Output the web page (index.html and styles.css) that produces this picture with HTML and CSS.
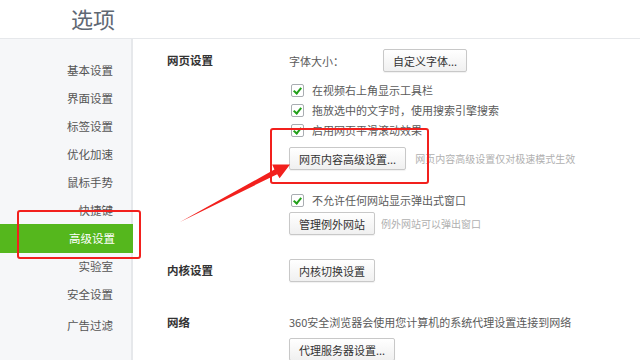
FILE: index.html
```html
<!DOCTYPE html>
<html lang="zh-CN">
<head>
    <meta charset="UTF-8">
    <title>选项</title>
    <link rel="stylesheet" href="styles.css">
</head>
<body>
    <div class="page">
        <header class="top-bar">
            <h1 class="title">选项</h1>
        </header>
        <div class="layout">
            <nav class="sidebar">
                <a class="nav-item">基本设置</a>
                <a class="nav-item">界面设置</a>
                <a class="nav-item">标签设置</a>
                <a class="nav-item">优化加速</a>
                <a class="nav-item">鼠标手势</a>
                <a class="nav-item">快捷键</a>
                <a class="nav-item active">高级设置</a>
                <a class="nav-item">实验室</a>
                <a class="nav-item">安全设置</a>
                <a class="nav-item last">广告过滤</a>
            </nav>
            <main class="content">
                <section class="section">
                    <div class="section-label">网页设置</div>
                    <div class="section-body">
                        <div class="row">
                            <span class="field-label">字体大小：</span>
                            <button class="btn">自定义字体...</button>
                        </div>
                        <div class="checks">
                            <label class="check"><span class="box"></span>在视频右上角显示工具栏</label>
                            <label class="check"><span class="box"></span>拖放选中的文字时，使用搜索引擎搜索</label>
                            <label class="check"><span class="box"></span>启用网页平滑滚动效果</label>
                        </div>
                        <div class="row gap-sm">
                            <button class="btn">网页内容高级设置...</button>
                            <span class="hint">网页内容高级设置仅对极速模式生效</span>
                        </div>
                        <label class="check popup"><span class="box"></span>不允许任何网站显示弹出式窗口</label>
                        <div class="row gap-xs">
                            <button class="btn">管理例外网站</button>
                            <span class="hint">例外网站可以弹出窗口</span>
                        </div>
                    </div>
                </section>
                <section class="section kernel">
                    <div class="section-label">内核设置</div>
                    <div class="section-body">
                        <button class="btn">内核切换设置</button>
                    </div>
                </section>
                <section class="section network">
                    <div class="section-label text-line">网络</div>
                    <div class="section-body">
                        <p class="text-line">360安全浏览器会使用您计算机的系统代理设置连接到网络</p>
                        <div class="row gap-proxy">
                            <button class="btn">代理服务器设置...</button>
                        </div>
                    </div>
                </section>
            </main>
        </div>

        <!-- annotation overlay -->
        <div class="mark mark-nav"></div>
        <div class="mark mark-btn"></div>
        <svg class="arrow" viewBox="0 0 640 360" width="640" height="360">
            <polygon points="180,222 274.4,169.6 272.2,164.6 290,164.5 279.6,178.2 277.2,174.2" fill="#f2201d"/>
        </svg>
    </div>
</body>
</html>
```

FILE: styles.css
```css
* {
    margin: 0;
    padding: 0;
    box-sizing: border-box;
}

body {
    background: #fff;
    font-family: "Noto Sans CJK SC", "Noto Sans", sans-serif;
    font-size: 11px;
    color: #5a5a5a;
}

.page {
    position: relative;
    width: 640px;
    height: 360px;
    overflow: hidden;
}

/* Header */
.top-bar {
    height: 39px;
    border-bottom: 1px solid #e6e8eb;
    padding-left: 71px;
}

.title {
    font-size: 22px;
    font-weight: normal;
    color: #5f6873;
    line-height: 37px;
}

.layout {
    display: flex;
    height: 321px;
}

/* Sidebar */
.sidebar {
    width: 133px;
    flex-shrink: 0;
    background: #f6f7f9;
    border-right: 2px solid #e6e8eb;
    padding-top: 17px;
    display: flex;
    flex-direction: column;
    font-size: 11.5px;
}

.nav-item {
    display: block;
    height: 28px;
    line-height: 28px;
    text-align: right;
    padding-right: 18px;
    color: #555;
}

.nav-item.active {
    height: 29px;
    line-height: 29px;
    margin-bottom: -1px;
    background: #55b71d;
    color: #fff;
    margin-right: -2px;
}

.nav-item.last {
    margin-top: 3px;
}

/* Content */
.content {
    flex: 1;
    padding: 10px 0 0 34px;
}

.section {
    display: grid;
    grid-template-columns: 122px 1fr;
}

.section-label {
    font-size: 11.5px;
    font-weight: bold;
    color: #333;
    line-height: 23px;
}

.row {
    display: flex;
    align-items: center;
}

.field-label {
    width: 94px;
}

.btn {
    height: 23px;
    padding: 0 9px;
    font-family: inherit;
    font-size: 11px;
    color: #333;
    background: linear-gradient(#ffffff, #f0f0f0);
    border: 1px solid #c8c8c8;
    border-radius: 2px;
    box-shadow: 0 1px 1px rgba(0,0,0,0.06);
}

.hint {
    font-size: 10px;
    color: #b0b0b0;
    margin-left: 9px;
}

.gap-xs .hint {
    margin-left: 6px;
}

.checks {
    margin-top: 8px;
}

.check {
    display: flex;
    align-items: center;
    height: 20px;
}

.box {
    position: relative;
    width: 13px;
    height: 13px;
    margin: 0 8px 0 2px;
    border: 1px solid #a9adb2;
    border-radius: 2px;
    background: #fff;
}

.box::after {
    content: "";
    position: absolute;
    left: 3px;
    top: 1px;
    width: 3px;
    height: 6px;
    border: solid #23a01a;
    border-width: 0 2px 2px 0;
    transform: rotate(40deg);
}

.gap-sm {
    margin-top: 7px;
}

.popup {
    margin-top: 20px;
}

.gap-xs {
    margin-top: 2px;
}

.kernel {
    margin-top: 24px;
}

.network {
    margin-top: 30px;
}

.text-line {
    line-height: 20px;
}

.gap-proxy {
    margin-top: 6px;
}

/* Annotation overlay */
.mark {
    position: absolute;
    border: 2px solid #f2201d;
    border-radius: 3px;
}

.mark-nav {
    left: 17px;
    top: 210px;
    width: 124px;
    height: 49px;
}

.mark-btn {
    left: 270px;
    top: 128px;
    width: 159px;
    height: 56px;
}

.arrow {
    position: absolute;
    left: 0;
    top: 0;
    pointer-events: none;
}
```
